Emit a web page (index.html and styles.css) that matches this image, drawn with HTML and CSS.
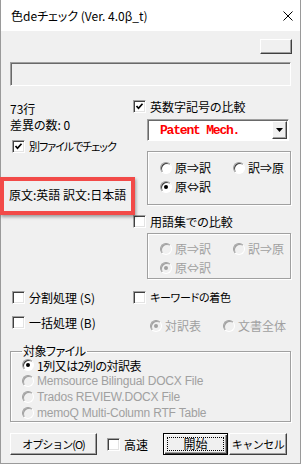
FILE: index.html
```html
<!DOCTYPE html>
<html lang="ja">
<head>
  <meta charset="UTF-8" />
  <title>色deチェック</title>
  <link rel="stylesheet" href="styles.css">
</head>
<body>

  <div class="window">
    <!-- タイトルバー -->
    <div class="titlebar">
      <span class="title">色deチェック (Ver. 4.0β_t)</span>
      <svg class="close" viewBox="0 0 10 10"><path d="M0.5 0.5 L9.5 9.5 M9.5 0.5 L0.5 9.5" stroke="#000" stroke-width="1"/></svg>
    </div>

    <div class="client">
      <div class="toprow"><button class="btn small"></button></div>
      <div class="field"></div>

      <div class="panes">
        <div class="left">
          <div class="line first">73行</div>
          <div class="line">差異の数: 0</div>
          <label class="check sep kana"><span class="box"><svg viewBox="0 0 9 9"><path d="M1.5 4 L3.5 6.3 L7.5 1.8" fill="none" stroke="#000" stroke-width="1.7"/></svg></span>別ファイルでチェック</label>
          <div class="lang">原文:英語 訳文:日本語</div>
        </div>

        <div class="right">
          <label class="check"><span class="box"><svg viewBox="0 0 9 9"><path d="M1.5 4 L3.5 6.3 L7.5 1.8" fill="none" stroke="#000" stroke-width="1.7"/></svg></span>英数字記号の比較</label>
          <div class="combo">
            <span class="combo-text">Patent Mech.</span>
            <span class="combo-btn"><svg viewBox="0 0 7 4"><path d="M0 0 H7 L3.5 4 Z" fill="#000"/></svg></span>
          </div>
          <div class="group">
            <label class="radio"><span class="dot"></span>原⇒訳</label>
            <label class="radio"><span class="dot"></span>訳⇒原</label>
            <label class="radio"><span class="dot on"></span>原⇔訳</label>
          </div>

          <label class="check glossary"><span class="box"></span>用語集での比較</label>
          <div class="group off">
            <label class="radio"><span class="dot"></span>原⇒訳</label>
            <label class="radio"><span class="dot"></span>訳⇒原</label>
            <label class="radio"><span class="dot on"></span>原⇔訳</label>
          </div>
        </div>
      </div>

      <div class="opts">
        <label class="check indent"><span class="box"></span>分割処理 (S)</label>
        <label class="check keyword"><span class="box"></span>キーワードの着色</label>
        <label class="check indent"><span class="box"></span>一括処理 (B)</label>
        <div class="pair off">
          <label class="radio"><span class="dot on"></span>対訳表</label>
          <label class="radio"><span class="dot"></span>文書全体</label>
        </div>
      </div>

      <fieldset class="target">
        <legend>対象ファイル</legend>
        <label class="radio row tight"><span class="dot on"></span>1列又は2列の対訳表</label>
        <label class="radio row off latin"><span class="dot"></span>Memsource Bilingual DOCX File</label>
        <label class="radio row off latin"><span class="dot"></span>Trados REVIEW.DOCX File</label>
        <label class="radio row off latin"><span class="dot"></span>memoQ Multi-Column RTF Table</label>
      </fieldset>

      <div class="actions">
        <button class="btn option">オプション(O)</button>
        <label class="check fast"><span class="box"></span>高速</label>
        <button class="btn start"><span class="focus">開始</span></button>
        <button class="btn cancel">キャンセル</button>
      </div>
    </div>

    <!-- 赤い注釈枠 -->
    <div class="mark"></div>
  </div>

</body>
</html>
```

FILE: styles.css
```css
body {
  margin: 0;
  background-color: #fff;
  color: #000;
  font-family: "Noto Sans CJK JP", "Liberation Sans", sans-serif;
  font-size: 12px;
  font-feature-settings: "palt";
}

.window {
  position: relative;
  width: 301px;
  height: 464px;
  box-sizing: border-box;
  border: 1px solid #9a9a9a;
  border-top: 0;
  background-color: #f0f0f0;
}

.titlebar {
  height: 31px;
  background-color: #fff;
  display: flex;
  align-items: center;
  justify-content: space-between;
  padding: 0 7px 0 10px;
}

.close {
  width: 10px;
  height: 10px;
}

.client {
  padding: 8px 9px 0 9px;
}

/* 立体ボタン */
.btn {
  box-sizing: border-box;
  height: 22px;
  padding: 0;
  border: 1px solid;
  border-color: #fff #404040 #404040 #fff;
  box-shadow: inset -1px -1px #a0a0a0;
  background-color: #f0f0f0;
  font-family: inherit;
  font-size: 12px;
  color: #000;
  white-space: nowrap;
}

.toprow {
  display: flex;
  justify-content: flex-end;
  margin-right: -1px;
}

.btn.small {
  width: 32px;
  height: 15px;
}

.field {
  margin-top: 8px;
  height: 24px;
  box-sizing: border-box;
  border: 1px solid;
  border-color: #a0a0a0 #fff #fff #a0a0a0;
  box-shadow: inset 1px 1px #696969;
}

.panes {
  display: grid;
  grid-template-columns: 123px 1fr;
  margin-top: 14px;
}

.line {
  line-height: 16px;
}

.line.first {
  margin-top: 1px;
}

/* チェックボックス */
.check {
  display: flex;
  align-items: center;
  gap: 3px;
  height: 13px;
  line-height: 13px;
  white-space: nowrap;
}

.kana {
  font-size: 11px;
  letter-spacing: -1px;
}

.keyword {
  font-size: 11px;
  letter-spacing: -0.3px;
}

.box {
  width: 13px;
  height: 13px;
  box-sizing: border-box;
  border: 1px solid;
  border-color: #a0a0a0 #fff #fff #a0a0a0;
  box-shadow: inset 1px 1px #404040, inset -1px -1px #e3e3e3;
  background-color: #fff;
  display: flex;
  align-items: center;
  justify-content: center;
  flex: none;
  margin-right: 1px;
}

.box svg {
  width: 9px;
  height: 9px;
}

.left .check.sep {
  margin-top: 7px;
  margin-left: 2px;
}

.lang {
  margin: 34px 0 0 -1px;
  line-height: 16px;
  white-space: nowrap;
}

/* コンボボックス */
.combo {
  margin: 6px 0 0 14px;
  width: 142px;
  height: 22px;
  box-sizing: border-box;
  border: 1px solid;
  border-color: #a0a0a0 #fff #fff #a0a0a0;
  box-shadow: inset 1px 1px #696969;
  background-color: #fff;
  display: flex;
  align-items: center;
  padding: 0 1px 0 12px;
}

.combo-text {
  flex: 1;
  color: #f00;
  font-family: "Liberation Mono", monospace;
  font-weight: bold;
  font-size: 13px;
  letter-spacing: -1.2px;
}

.combo-btn {
  width: 15px;
  height: 18px;
  box-sizing: border-box;
  border: 1px solid;
  border-color: #fff #404040 #404040 #fff;
  box-shadow: inset -1px -1px #a0a0a0;
  background-color: #f0f0f0;
  display: flex;
  align-items: center;
  justify-content: center;
}

.combo-btn svg {
  width: 7px;
  height: 4px;
}

/* グループ枠 */
.group {
  margin: 10px 0 0 14px;
  width: 144px;
  height: 54px;
  box-sizing: border-box;
  border: 1px solid #a0a0a0;
  box-shadow: inset 1px 1px #fff, 1px 1px #fff;
  padding: 6px 0 0 12px;
  display: grid;
  grid-template-columns: 73px 1fr;
  grid-auto-rows: 19px;
  align-items: center;
}

.group.off {
  margin-top: 5px;
  height: 46px;
  padding-top: 5px;
}

.right .check.glossary {
  margin-top: 10px;
}

/* ラジオボタン */
.radio {
  display: flex;
  align-items: center;
  gap: 3px;
  white-space: nowrap;
}

.dot {
  position: relative;
  width: 12px;
  height: 12px;
  box-sizing: border-box;
  border-radius: 50%;
  border: 1px solid;
  border-color: #a0a0a0 #fff #fff #a0a0a0;
  box-shadow: inset 1px 1px #404040;
  background-color: #fff;
  flex: none;
}

.dot.on::after {
  content: "";
  position: absolute;
  left: 3px;
  top: 3px;
  width: 4px;
  height: 4px;
  border-radius: 50%;
  background-color: #000;
}

.off .radio,
.radio.off {
  color: #a0a0a0;
}

.off .dot,
.radio.off .dot {
  background-color: #f0f0f0;
  box-shadow: inset 1px 1px #a0a0a0;
}

.off .dot.on::after {
  background-color: #a0a0a0;
}

.opts {
  display: grid;
  grid-template-columns: 123px 1fr;
  row-gap: 12px;
  margin-top: 12px;
}

.opts .indent {
  margin-left: 2px;
}

.pair {
  display: grid;
  grid-template-columns: 73px 1fr;
  margin: 1px 0 0 17px;
}

/* 対象ファイル */
.target {
  margin: 11px 0 0 0;
  padding: 0 0 0 11px;
  min-width: 0;
  border: 1px solid #a0a0a0;
  box-shadow: inset 1px 1px #fff, 1px 1px #fff;
}

.target legend {
  padding: 0 1px;
  line-height: 12px;
  letter-spacing: -0.5px;
}

.radio.row {
  height: 16px;
}

.tight {
  letter-spacing: -0.5px;
}

.latin {
  font-family: "Liberation Sans", sans-serif;
  letter-spacing: -0.2px;
}

.actions {
  display: flex;
  align-items: center;
  margin-top: 11px;
}

.btn.option {
  width: 87px;
  font-size: 11px;
  letter-spacing: -1px;
}

.check.fast {
  margin-left: 10px;
}

.btn.start {
  margin-left: auto;
  width: 65px;
  border: 1px solid #000;
  box-shadow: inset 1px 1px #fff, inset -1px -1px #404040, inset -2px -2px #a0a0a0;
  padding: 3px;
}

.focus {
  display: block;
  height: 100%;
  box-sizing: border-box;
  border: 1px dotted #000;
  line-height: 12px;
}

.btn.cancel {
  width: 58px;
  margin: 0 4px 0 1px;
  font-size: 11px;
  letter-spacing: -0.5px;
}

.mark {
  position: absolute;
  left: -1px;
  top: 177px;
  width: 135px;
  height: 38px;
  box-sizing: border-box;
  border: 4px solid #f24a48;
  box-shadow: 1px 2px 3px rgba(0, 0, 0, 0.35);
}
```
